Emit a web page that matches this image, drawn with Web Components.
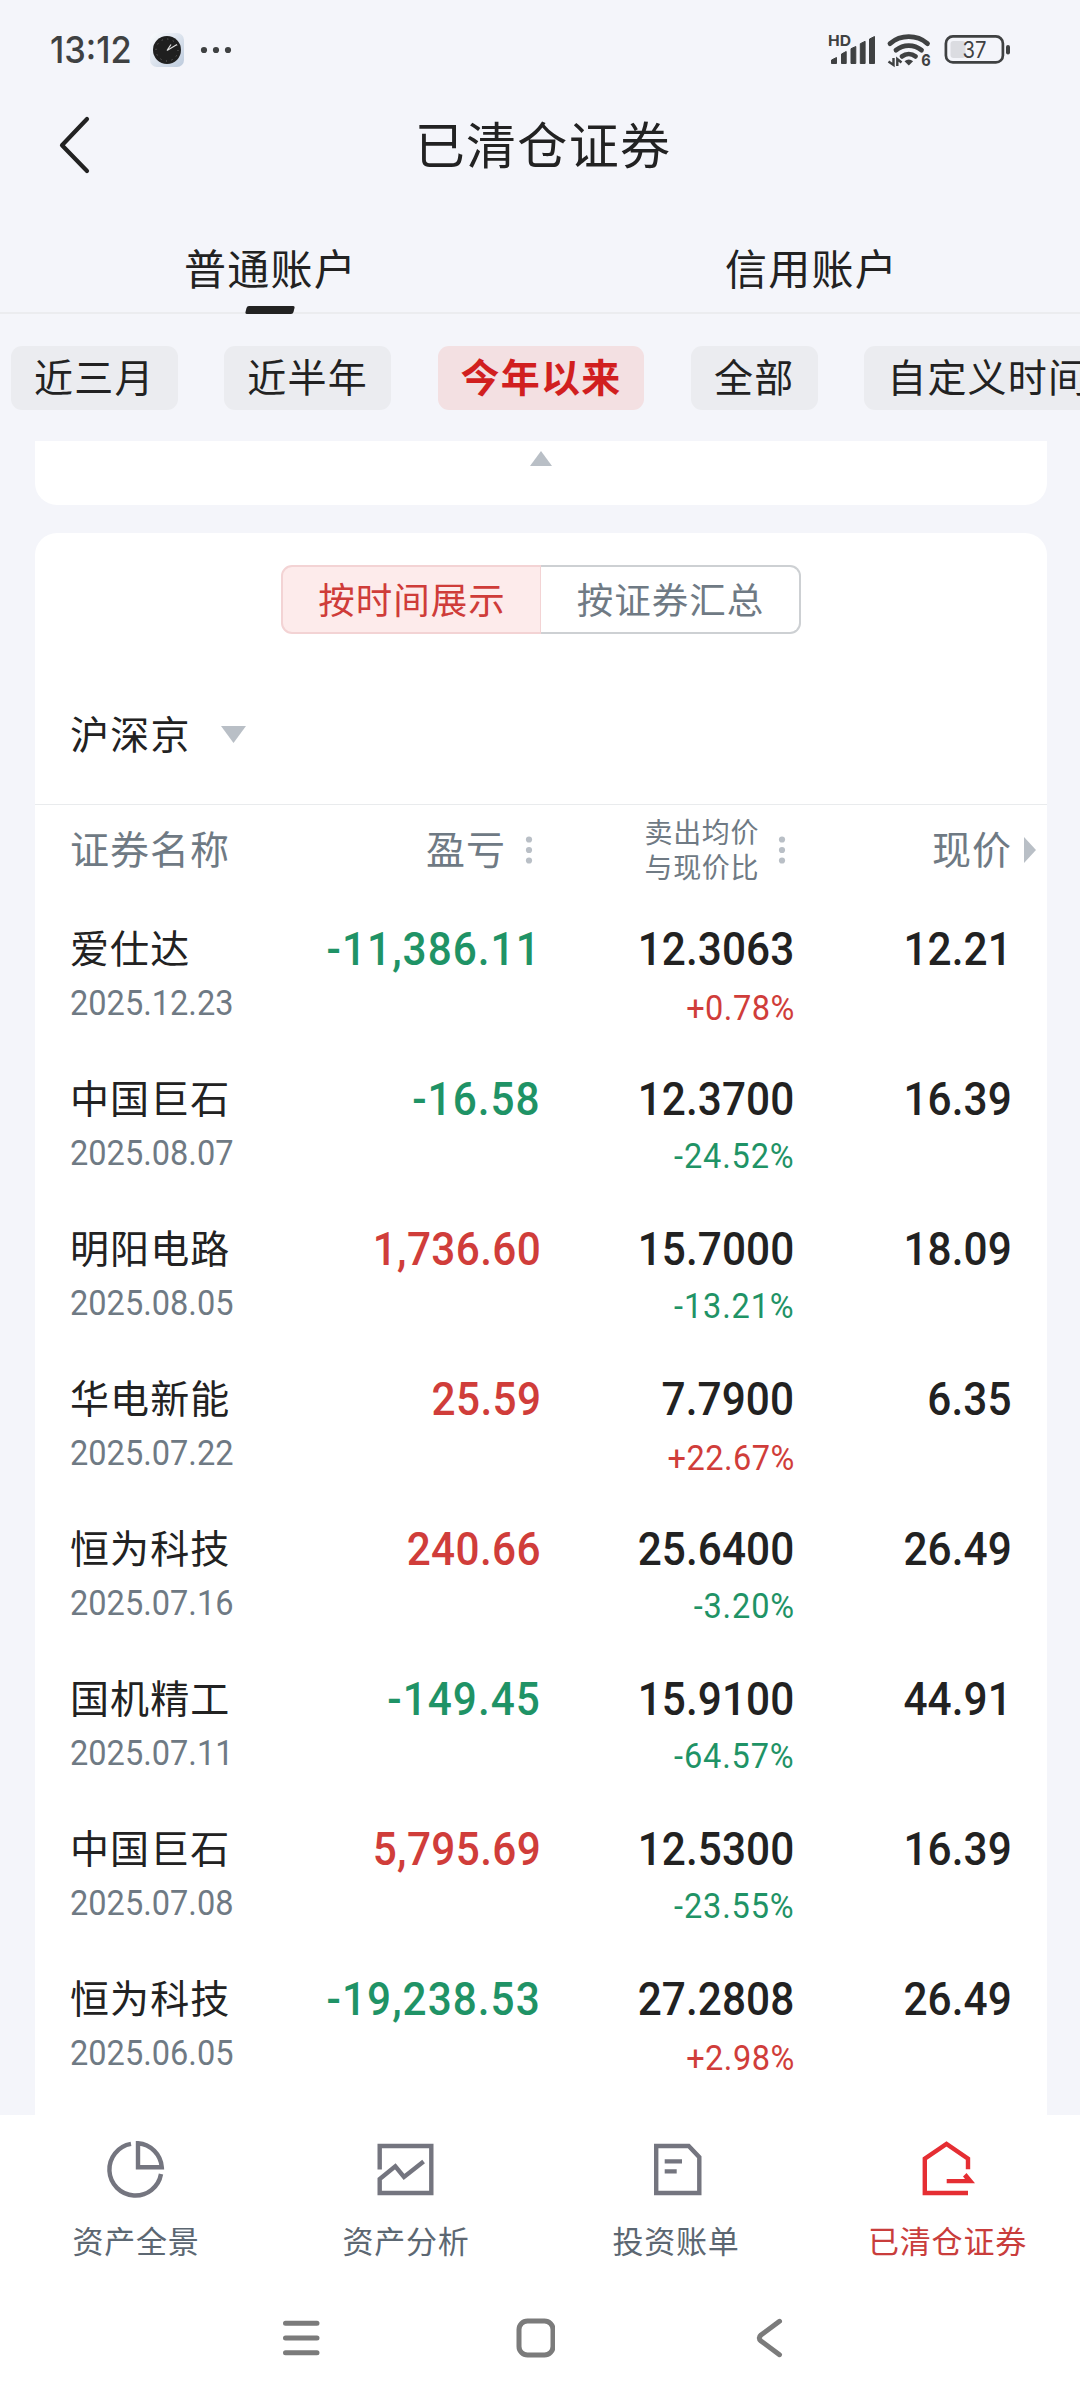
<!DOCTYPE html>
<html lang="zh-CN">
<head>
<meta charset="utf-8">
<meta name="viewport" content="width=device-width">
<title>已清仓证券</title>
<style>
  html, body { margin: 0; height: 100%; }
  body {
    --ink: #222;
    --muted: #6f7a84;
    --faint: #b9bfc6;
    --up: #d03d3a;
    --down: #1f9366;
    --num: Roboto, "Liberation Sans", sans-serif;
    background: #f4f5fa;
    color: var(--ink);
    font-family: "Noto Sans CJK SC", "Noto Sans", sans-serif;
    overflow: hidden;
  }
</style>
</head>
<body>
<cleared-app></cleared-app>

<script>
(function () {
  "use strict";

  // Small helper: a custom element whose shadow root is rendered once.
  function define(name, render) {
    customElements.define(
      name,
      class extends HTMLElement {
        connectedCallback() {
          if (this.shadowRoot) return;
          this.attachShadow({ mode: "open" }).innerHTML = render(this);
        }
      },
    );
  }

  var ROWS = [
    ["爱仕达", "2025.12.23", "-11,386.11", "12.3063", "+0.78%", "12.21"],
    ["中国巨石", "2025.08.07", "-16.58", "12.3700", "-24.52%", "16.39"],
    ["明阳电路", "2025.08.05", "1,736.60", "15.7000", "-13.21%", "18.09"],
    ["华电新能", "2025.07.22", "25.59", "7.7900", "+22.67%", "6.35"],
    ["恒为科技", "2025.07.16", "240.66", "25.6400", "-3.20%", "26.49"],
    ["国机精工", "2025.07.11", "-149.45", "15.9100", "-64.57%", "44.91"],
    ["中国巨石", "2025.07.08", "5,795.69", "12.5300", "-23.55%", "16.39"],
    ["恒为科技", "2025.06.05", "-19,238.53", "27.2808", "+2.98%", "26.49"],
  ];

  // 60x60 line icons of the bottom tabs, drawn in currentColor.
  var ICONS = {
    pie:
      '<path d="M26 4.9A26 26 0 1 0 56 35"/>' +
      '<path d="M33 4.3V28.3H56.8A26 26 0 0 0 33 4.3Z"/>',
    chart: '<path d="M4.7 30.5V7H56.3V54H4.7V40L20.3 27.3 29 38 48.6 22.5"/>',
    bill:
      '<path d="M11.2 7H43.7L54.3 18.2V54H11.2Z"/>' +
      '<path d="M19.7 22.4H37M19.7 32.4H31.7"/>',
    house:
      '<path d="M53 30.3V19.6L31.5 4.9 9.8 19.6V54H53"/>' +
      '<path d="M31.7 40H50L48 37.4 51.5 34 60 44.2H31.7Z" fill="currentColor" stroke="none"/>',
  };

  define("status-bar", function () {
    return `
      <style>
        :host { display: flex; align-items: flex-start; height: 98px; box-sizing: border-box;
          padding: 30px 66px 0 50px; color: #3f4142; }
        .time { width: 100px; height: 40px; font: 500 37px/40px Inter, sans-serif; }
        .time span { display: inline-block; transform: scaleX(.93); transform-origin: left; }
        svg { display: block; }
        .right { margin-left: auto; }
        text { font-family: Inter, sans-serif; fill: currentColor; }
      </style>
      <div class="time"><span>13:12</span></div>
      <svg width="90" height="40" viewBox="0 0 90 40">
        <defs><linearGradient id="g" x1="0" y1="0" x2="1" y2="1">
          <stop stop-color="#fbfcfe"/><stop offset="1" stop-color="#bccadc"/></linearGradient></defs>
        <rect y="3" width="34" height="34" rx="7" fill="url(#g)"/>
        <circle cx="17" cy="20" r="14" fill="#1f1f1f"/>
        <circle cx="17" cy="20" r="11" fill="none" stroke="#777" stroke-width="1" stroke-dasharray="1 4.76"/>
        <path d="M17 20.5 21 14.5M17 20.5 27 14.5" stroke="#ddd" stroke-width="1.2"/>
        <g fill="currentColor"><circle cx="54" cy="20" r="3.1"/><circle cx="66" cy="20" r="3.1"/><circle cx="78" cy="20" r="3.1"/></g>
      </svg>
      <svg class="right" width="188" height="40" viewBox="0 0 188 40">
        <text x="2" y="16" font-size="15" font-weight="700" textLength="23" lengthAdjust="spacingAndGlyphs">HD</text>
        <path fill="currentColor" stroke="currentColor" stroke-width="1" stroke-linejoin="round"
          d="M5.5 30 10.5 27.5V33.5H5.5ZM15.5 24 20.2 21.5V33.5H15.5ZM25 18.7 29.8 16.5V33.5H25ZM34.3 13.7 39.1 11.3V33.5H34.3ZM43.5 9 48.5 6.5V33.5H43.5Z"/>
        <g fill="none" stroke="currentColor" stroke-width="4.8" stroke-linecap="round">
          <path d="M64 13.6A29 29 0 0 1 101.5 13.6M70 20.2A20 20 0 0 1 95.5 20.2M76 26.4A11 11 0 0 1 89.5 26.4"/>
        </g>
        <path fill="currentColor" d="M82.8 35.5 78.5 31.2Q82.8 27.6 87.100 31.2Z"/>
        <path stroke="currentColor" stroke-width="2.4" fill="none" d="M67.5 28V35L62.500 31.5M71.300 36V29L75.5 32.5"/>
        <text x="95.2" y="36" font-size="16.5" font-weight="700" textLength="9.5" lengthAdjust="spacingAndGlyphs">6</text>
        <rect x="119.9" y="6.4" width="57" height="26" rx="7" fill="none" stroke="currentColor" stroke-width="2.7"/>
        <rect x="124.5" y="11" width="15" height="17" rx="3" fill="#dbdce1"/>
        <text x="136.5" y="28" font-size="22.5" textLength="24" lengthAdjust="spacingAndGlyphs">37</text>
        <rect x="180" y="15" width="4" height="9.5" rx="2" fill="currentColor"/>
      </svg>`;
  });

  define("title-bar", function () {
    return `
      <style>
        :host { display: grid; grid-template-columns: 160px 1fr 160px; align-items: center; height: 92px; }
        svg { display: block; margin-left: 56px; }
        h1 { margin: 0; padding-left: 6px; font-size: 50px; line-height: 88px; height: 92px; font-weight: 400;
          letter-spacing: 1.3px; text-align: center; }
      </style>
      <svg width="36" height="60" viewBox="0 0 36 60"><path d="M31 5 6 31.2 31 57" fill="none" stroke="#222" stroke-width="4.2" stroke-linecap="round" stroke-linejoin="round"/></svg>
      <h1><slot></slot></h1>`;
  });

  define("account-tabs", function (el) {
    return `
      <style>
        :host { display: flex; height: 124px; box-sizing: border-box; border-bottom: 2px solid #ebecef; }
        div { flex: 1; display: flex; flex-direction: column; align-items: center; justify-content: flex-end;
          padding-left: 2px; font-size: 42px; line-height: 60px; letter-spacing: 1.2px; }
        div + div { padding-left: 4px; }
        i { width: 48px; height: 8px; margin: 9px 0 -2px -1px; border-radius: 2px; transform: skewX(-14deg); }
        .on i { background: #222; }
      </style>` +
      el.getAttribute("items").split(",").map(function (t, n) {
        return `<div class="${n === 0 ? "on" : ""}">${t}<i></i></div>`;
      }).join("");
  });

  define("range-chip", function () {
    return `
      <style>
        :host { flex: none; height: 64px; padding: 0 23px; border-radius: 11px; background: #ebecf0;
          font-size: 39px; line-height: 58px; letter-spacing: 1.2px; white-space: nowrap; }
        :host([active]) { background: #f3e0e2; color: #d11f1f; font-weight: 700; }
      </style><slot></slot>`;
  });

  define("range-bar", function () {
    return `
      <style>
        :host { display: flex; gap: 46.7px; height: 127px; box-sizing: border-box; padding: 32px 0 0 11px; overflow: hidden; }
      </style><slot></slot>`;
  });

  define("segment-switch", function (el) {
    var items = el.getAttribute("items").split(",");
    return `
      <style>
        :host { display: flex; width: 520px; margin: 0 auto; }
        div { width: 260px; box-sizing: border-box; height: 69px; border: 2px solid #cdd0d3; border-left: 0;
          border-radius: 0 11px 11px 0; color: var(--muted); font-size: 36.5px; line-height: 64px;
          letter-spacing: 1px; text-align: center; padding-left: 1px; }
        .on { border: 2px solid #f3d3d4; border-right-width: 1px; border-radius: 11px 0 0 11px; background: #fdebeb; color: #cf3c39; }
      </style>
      <div class="on">${items[0]}</div><div>${items[1]}</div>`;
  });

  define("sort-dots", function () {
    return `
      <style>:host { display: block; } svg { display: block; }</style>
      <svg width="24" height="30" viewBox="0 0 24 30" fill="#b9bfc6">
        <circle cx="12" cy="4.5" r="3.1"/><circle cx="12" cy="15" r="3.1"/><circle cx="12" cy="25.5" r="3.1"/>
      </svg>`;
  });

  define("table-head", function () {
    return `
      <style>
        :host { display: grid; grid-template-columns: 200px 271px 253px 218px; align-items: center;
          height: 90px; padding: 0 35px; border-top: 1px solid #e9ebed; color: var(--muted);
          font-size: 39px; line-height: 60px; letter-spacing: 1px; white-space: nowrap; }
        div { display: flex; align-items: center; justify-content: flex-end; gap: 11px; }
        .first { justify-content: flex-start; }
        span { margin-top: -6px; }
        small { margin-top: -2px; font-size: 28px; line-height: 35px; letter-spacing: .6px; }
        .last { gap: 12px; margin-right: -24px; }
        svg { display: block; }
      </style>
      <div class="first"><span>证券名称</span></div>
      <div><span>盈亏</span><sort-dots></sort-dots></div>
      <div><small>卖出均价<br>与现价比</small><sort-dots></sort-dots></div>
      <div class="last"><span>现价</span><svg width="12" height="26" viewBox="0 0 12 26"><path d="M0 0 12 13 0 26Z" fill="#b9bfc6"/></svg></div>`;
  });

  define("stock-row", function (el) {
    var d = ROWS[el.getAttribute("index")];
    // Losses are green and gains are red on mainland exchanges.
    function tone(v) {
      return v.charAt(0) === "-" ? "down" : "up";
    }
    return `
      <style>
        :host { display: grid; grid-template-columns: 200px 271px 253px 218px; height: 150px; padding: 0 35px; }
        div { display: flex; flex-direction: column; align-items: flex-end; }
        .first { align-items: flex-start; }
        .name { height: 56px; font-size: 39px; line-height: 55px; letter-spacing: 1.1px; white-space: nowrap; margin-top: 22px; }
        .date, .pct { font: 400 35px/40px var(--num); transform: scaleX(.93); white-space: nowrap; }
        .date { margin-top: 9px; color: var(--muted); transform-origin: left; }
        .num { margin-top: 24px; font: 500 46px/56px var(--num); transform: scaleX(.92); transform-origin: right; letter-spacing: .1px; }
        .num.up { letter-spacing: .4px; }
        .num.down { letter-spacing: 1.1px; }
        .pct { margin: 12px -1px 0 0; transform-origin: right; letter-spacing: .5px; }
        .pct.down { margin-top: 10px; letter-spacing: .9px; }
        .up { color: var(--up); }
        .down { color: var(--down); }
      </style>
      <div class="first"><span class="name">${d[0]}</span><span class="date">${d[1]}</span></div>
      <div><span class="num ${tone(d[2])}">${d[2]}</span></div>
      <div><span class="num">${d[3]}</span><span class="pct ${tone(d[4])}">${d[4]}</span></div>
      <div><span class="num">${d[5]}</span></div>`;
  });

  define("market-filter", function () {
    return `
      <style>
        :host { display: flex; align-items: center; gap: 30px; height: 170px; padding: 31px 35px 0; box-sizing: border-box;
          font-size: 39px; line-height: 60px; letter-spacing: 1.2px; }
        span { margin-top: -6px; }
      </style>
      <span><slot></slot></span>
      <svg width="25" height="17" viewBox="0 0 25 17"><path d="M0 0H25L12.5 17Z" fill="#b9bfc6"/></svg>`;
  });

  define("white-card", function () {
    return `
      <style>
        :host { display: block; margin: 0 33px 0 35px; background: #fff; border-radius: 22px 22px 0 0; }
        :host([tail]) { display: flex; justify-content: center; height: 54px; padding-top: 10px;
          border-radius: 0 0 22px 22px; margin-bottom: 28px; }
      </style><slot></slot>`;
  });

  define("tab-item", function (el) {
    return `
      <style>
        :host { flex: 1; display: flex; flex-direction: column; align-items: center; color: #74757f; }
        :host([active]) { color: #e52e33; }
        svg { display: block; fill: none; stroke: currentColor; stroke-width: 4.4; }
        span { margin: 18px 0 0 2px; color: #5c6772; font-size: 31px; line-height: 46px; letter-spacing: .8px; }
        :host([active]) span { margin-left: 5px; color: #c93d3c; }
      </style>
      <svg width="60" height="60" viewBox="0 0 60 60">${ICONS[el.getAttribute("icon")]}</svg>
      <span><slot></slot></span>`;
  });

  define("bottom-tabs", function () {
    return `
      <style>
        :host { display: flex; height: 170px; box-sizing: border-box; padding-top: 24px; background: #fff; }
      </style><slot></slot>`;
  });

  define("system-nav", function () {
    return `
      <style>
        :host { display: flex; justify-content: center; gap: 194px; height: 115px; box-sizing: border-box;
          padding: 33px 10px 0 0; background: #fff; }
        svg { display: block; fill: none; stroke: #7b7b7b; stroke-width: 5; stroke-linecap: round; stroke-linejoin: round; }
      </style>
      <svg width="40" height="40" viewBox="0 0 40 40"><path d="M4.5 5.3H36M4.5 20H36M4.5 34.7H36"/></svg>
      <svg width="40" height="40" viewBox="0 0 40 40"><rect x="4" y="3" width="34" height="34" rx="8.5"/></svg>
      <svg width="40" height="40" viewBox="0 0 40 40"><path d="M30.5 3.3 12 17Q8.5 20 12 23L30.5 36.7"/></svg>`;
  });

  define("cleared-app", function () {
    return `
      <style>
        :host { display: flex; flex-direction: column; width: 1080px; height: 2400px; overflow: hidden; }
        main { flex: 1; min-height: 0; overflow: hidden; }
        .list { height: 1700px; padding-top: 32px; }
        .rows { padding-top: 2px; }
      </style>
      <status-bar></status-bar>
      <title-bar>已清仓证券</title-bar>
      <account-tabs items="普通账户,信用账户"></account-tabs>
      <range-bar>
        <range-chip>近三月</range-chip><range-chip>近半年</range-chip><range-chip active>今年以来</range-chip><range-chip>全部</range-chip><range-chip>自定义时间</range-chip>
      </range-bar>
      <main>
        <white-card tail><svg width="22" height="15" viewBox="0 0 22 15"><path d="M11 0 22 15H0Z" fill="#b9bfc6"/></svg></white-card>
        <white-card><div class="list">
          <segment-switch items="按时间展示,按证券汇总"></segment-switch>
          <market-filter>沪深京</market-filter>
          <table-head></table-head>
          <div class="rows">${ROWS.map(function (r, n) { return `<stock-row index="${n}"></stock-row>`; }).join("")}</div>
        </div></white-card>
      </main>
      <bottom-tabs>
        <tab-item icon="pie">资产全景</tab-item>
        <tab-item icon="chart">资产分析</tab-item>
        <tab-item icon="bill">投资账单</tab-item>
        <tab-item icon="house" active>已清仓证券</tab-item>
      </bottom-tabs>
      <system-nav></system-nav>`;
  });
})();
</script>
</body>
</html>
